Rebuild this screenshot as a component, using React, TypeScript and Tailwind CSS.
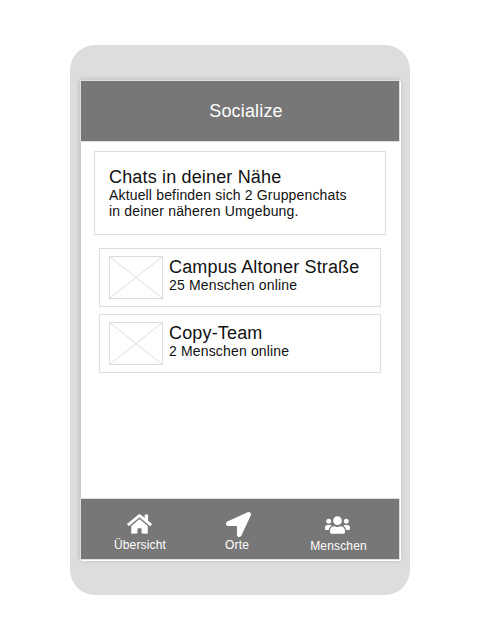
import { FaHome, FaLocationArrow, FaUsers } from "react-icons/fa";

const chats = [
  { name: "Campus Altoner Straße", online: "25 Menschen online" },
  { name: "Copy-Team", online: "2 Menschen online" },
];

function Placeholder() {
  return (
    <svg className="h-[43px] w-[54px] shrink-0" viewBox="0 0 54 43" fill="none" stroke="#dddddd">
      <path d="M0.5 0.5L53.5 42.5M53.5 0.5L0.5 42.5" />
      <rect x="0.5" y="0.5" width="53" height="42" />
    </svg>
  );
}

function ChatRow({ name, online }: { name: string; online: string }) {
  return (
    <li className="flex h-[59px] w-[282px] border border-[#dddddd] pt-[7px] pl-[9px]">
      <Placeholder />
      <div className="ml-1.5 pt-px">
        <h3 className="text-[18px] leading-5 whitespace-nowrap">{name}</h3>
        <p className="text-[14px] leading-4">{online}</p>
      </div>
    </li>
  );
}

export default function App() {
  return (
    <main className="flex h-[640px] w-[480px] items-start justify-center bg-white pt-[45px] font-['Liberation_Sans',Arial,sans-serif] tracking-[0.16px] text-[#111111]">
      <div className="h-[550px] w-[340px] rounded-[25px] bg-[#dddddd] pt-9 pl-[11px]">
        <div className="flex h-[480px] w-80 flex-col bg-white shadow-[-1px_-1px_5px_rgba(0,0,0,0.18)]">
          <header className="-mt-px -ml-px flex h-[62px] w-80 shrink-0 items-center justify-center border border-[#dddddd] bg-[#777777] pl-3 text-[18px] leading-5 text-white">
            Socialize
          </header>

          <section className="mt-[9px] ml-[13px] h-[84px] w-[292px] shrink-0 border border-[#dddddd] pt-[15px] pl-3.5">
            <h2 className="text-[18px] leading-5">Chats in deiner Nähe</h2>
            <p className="text-[14px] leading-4">
              Aktuell befinden sich 2 Gruppenchats
              <br />
              in deiner näheren Umgebung.
            </p>
          </section>

          <ul className="mt-[13px] ml-[18px] flex flex-col gap-[7px]">
            {chats.map((chat) => (
              <ChatRow key={chat.name} {...chat} />
            ))}
          </ul>

          <nav className="mt-auto mb-px -ml-px flex h-[62px] w-80 shrink-0 border border-[#dddddd] bg-[#777777] text-[12px] leading-[14px] text-white">
            <a className="ml-[29px] flex w-[60px] flex-col items-center pt-[14px]">
              <FaHome className="-ml-px h-[22px] w-[25px]" />
              <span className="mt-[3px]">Übersicht</span>
            </a>
            <a className="ml-[37px] flex w-[60px] flex-col items-center pt-[13px]">
              <FaLocationArrow className="ml-[3px] h-[25px] w-[25px]" />
              <span className="mt-px">Orte</span>
            </a>
            <a className="ml-[41px] flex w-[60px] flex-col items-center pt-4">
              <FaUsers className="-ml-px h-5 w-[25px]" />
              <span className="mt-1 pl-px">Menschen</span>
            </a>
          </nav>
        </div>
      </div>
    </main>
  );
}
